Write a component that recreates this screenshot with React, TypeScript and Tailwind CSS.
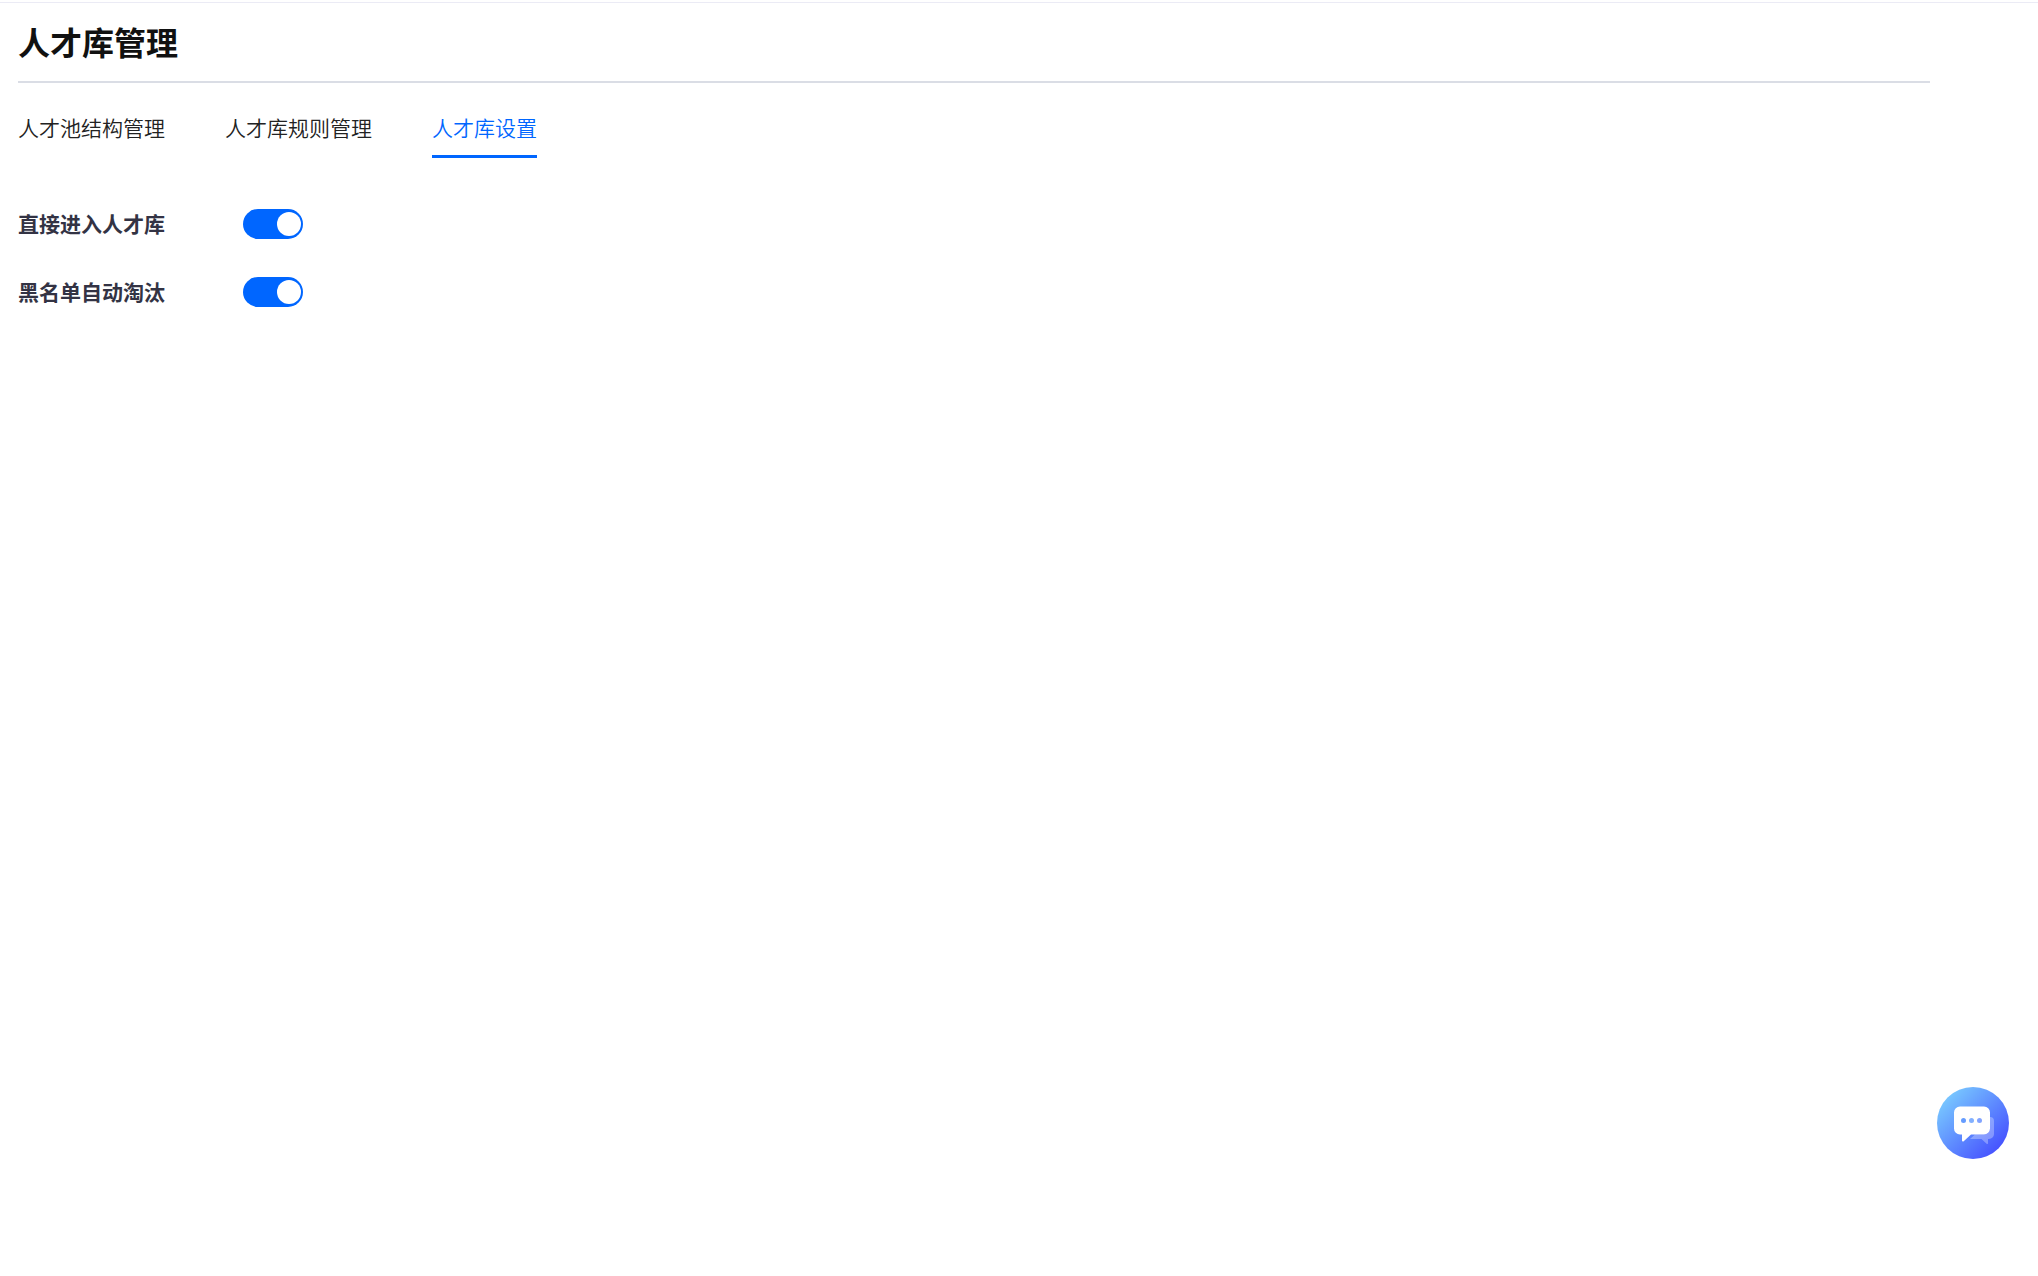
import { useState } from "react";
import * as Switch from "@radix-ui/react-switch";
import clsx from "clsx";

const tabs = ["人才池结构管理", "人才库规则管理", "人才库设置"];

interface SettingRowProps {
  id: string;
  label: string;
}

const SettingRow = ({ id, label }: SettingRowProps) => {
  const [checked, setChecked] = useState(true);

  return (
    <div className="flex items-center">
      <label
        htmlFor={id}
        className="w-[225px] pb-0.5 text-[21px] leading-7 font-bold text-[#333344]"
      >
        {label}
      </label>
      <Switch.Root
        id={id}
        checked={checked}
        onCheckedChange={setChecked}
        className="flex h-[30px] w-[60px] items-center rounded-full bg-gray-300 px-0.5 data-[state=checked]:justify-end data-[state=checked]:bg-[#0066ff]"
      >
        <Switch.Thumb className="block size-6 rounded-full bg-white" />
      </Switch.Root>
    </div>
  );
};

const ChatIcon = () => (
  <svg viewBox="0 0 72 72" className="size-full" aria-hidden="true">
    <defs>
      <linearGradient id="chat-bg" x1="0.1" y1="0.1" x2="0.88" y2="0.88">
        <stop offset="0" stopColor="#7accff" />
        <stop offset="1" stopColor="#4550ff" />
      </linearGradient>
    </defs>
    <circle cx="36" cy="36" r="36" fill="url(#chat-bg)" />
    <path
      d="M53 30a4 4 0 0 1 4 4v13a5 5 0 0 1-5 5h-1v4.200a.8.8 0 0 1-1.400.6L44.500 52H33l5-4.500h9a6 6 0 0 0 6-6z"
      fill="#fff"
      fillOpacity="0.3"
    />
    <path
      d="M23 19.500h24a6 6 0 0 1 6 6v16a6 6 0 0 1-6 6H34l-7.300 6.700a1 1 0 0 1-1.700-.7v-6h-2a6 6 0 0 1-6-6V25.500a6 6 0 0 1 6-6z"
      fill="#fff"
    />
    <circle cx="26.500" cy="33.500" r="2.500" fill="#659cff" />
    <circle cx="34.500" cy="33.500" r="2.500" fill="#82b0ff" />
    <circle cx="42.500" cy="33.500" r="2.500" fill="#82a4ff" />
  </svg>
);

const App = () => {
  const [activeTab, setActiveTab] = useState("人才库设置");

  return (
    <div className="min-h-screen bg-white pt-0.5 font-['Noto_Sans_CJK_SC',sans-serif]">
      <main className="border-t border-[#ebebf5] pr-[108px] pl-[18px]">
        <h1 className="border-b-2 border-[#dadde5] pt-[14px] pb-4 text-[32px] leading-[48px] font-bold text-[#111111]">
          人才库管理
        </h1>
        <nav className="mt-[29px] flex gap-[60px]">
          {tabs.map((tab) => (
            <button
              key={tab}
              type="button"
              onClick={() => setActiveTab(tab)}
              className={clsx(
                "border-b-[3px] pb-[13px] text-[21px] leading-[30px] font-[350]",
                activeTab === tab
                  ? "border-[#0066ff] text-[#0066ff]"
                  : "border-transparent text-[#222222]"
              )}
            >
              {tab}
            </button>
          ))}
        </nav>
        <section className="mt-[51px] flex flex-col gap-[38px]">
          <SettingRow id="direct-entry" label="直接进入人才库" />
          <SettingRow id="blacklist-reject" label="黑名单自动淘汰" />
        </section>
      </main>
      <button
        type="button"
        aria-label="在线客服"
        className="fixed right-[29px] bottom-[117px] size-[72px] rounded-full"
      >
        <ChatIcon />
      </button>
    </div>
  );
};

export default App;
